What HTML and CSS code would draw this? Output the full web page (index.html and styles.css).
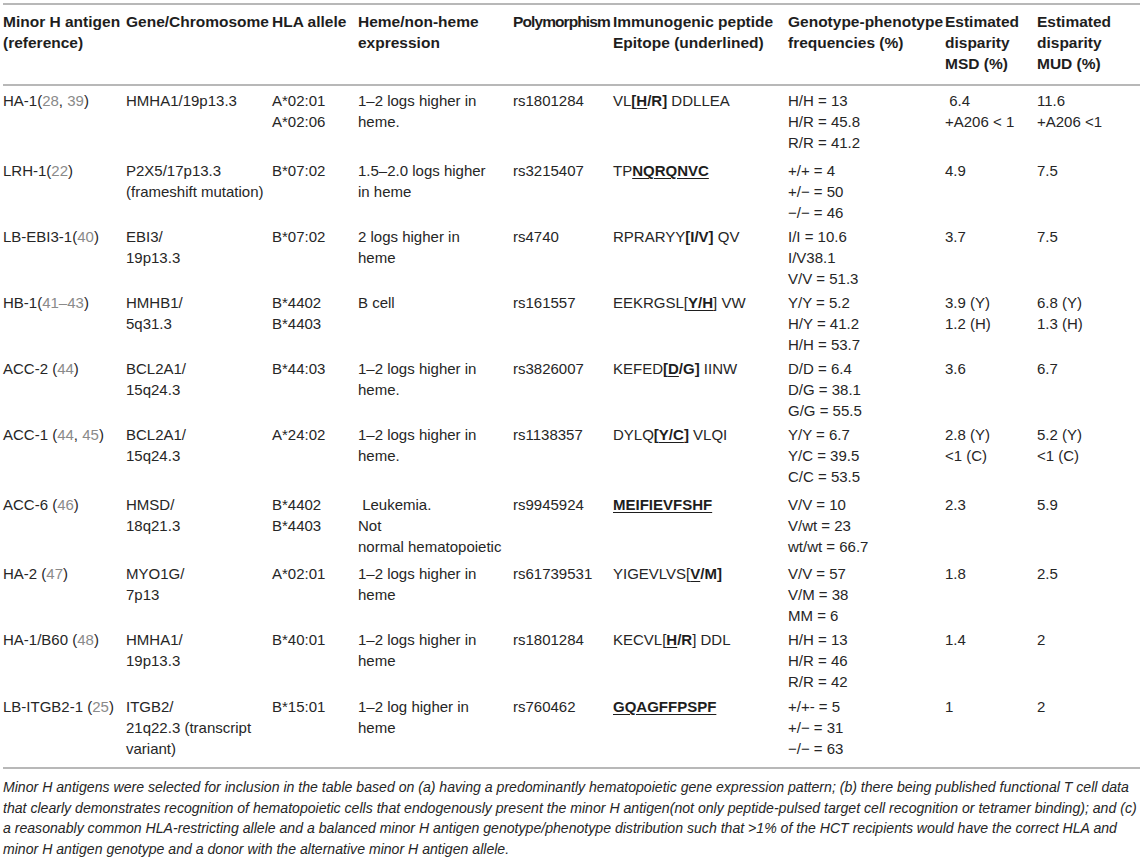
FILE: index.html
```html
<!DOCTYPE html>
<html lang="en">
<head>
<meta charset="utf-8">
<title>Minor H antigens</title>
<link rel="stylesheet" href="styles.css">
</head>
<body>
<div class="page">
<table class="mha">
<colgroup>
<col class="c1"><col class="c2"><col class="c3"><col class="c4"><col class="c5"><col class="c6"><col class="c7"><col class="c8"><col class="c9">
</colgroup>
<thead>
<tr>
<th>Minor H antigen<br>(reference)</th>
<th>Gene/Chromosome</th>
<th>HLA allele</th>
<th>Heme/non-heme<br>expression</th>
<th class="tight">Polymorphism</th>
<th>Immunogenic peptide<br>Epitope (underlined)</th>
<th>Genotype-phenotype<br>frequencies (%)</th>
<th>Estimated<br>disparity<br>MSD (%)</th>
<th>Estimated<br>disparity<br>MUD (%)</th>
</tr>
</thead>
<tbody>
<tr class="first gap4">
<td>HA-1(<span class="ref">28</span>, <span class="ref">39</span>)</td>
<td>HMHA1/19p13.3</td>
<td>A*02:01<br>A*02:06</td>
<td>1–2 logs higher in<br>heme.</td>
<td>rs1801284</td>
<td>VL<b>[<u>H</u>/R]</b> DDLLEA</td>
<td>H/H = 13<br>H/R = 45.8<br>R/R = 41.2</td>
<td>&nbsp;6.4<br>+A206 &lt; 1</td>
<td>11.6<br>+A206 &lt;1</td>
</tr>
<tr>
<td>LRH-1(<span class="ref">22</span>)</td>
<td>P2X5/17p13.3<br>(frameshift mutation)</td>
<td>B*07:02</td>
<td>1.5–2.0 logs higher<br>in heme</td>
<td>rs3215407</td>
<td>TP<b><u>NQRQNVC</u></b></td>
<td>+/+ = 4<br>+/− = 50<br>−/− = 46</td>
<td>4.9</td>
<td>7.5</td>
</tr>
<tr>
<td>LB-EBI3-1(<span class="ref">40</span>)</td>
<td>EBI3/<br>19p13.3</td>
<td>B*07:02</td>
<td>2 logs higher in<br>heme</td>
<td>rs4740</td>
<td>RPRARYY<b>[I/V]</b> QV</td>
<td>I/I = 10.6<br>I/V38.1<br>V/V = 51.3</td>
<td>3.7</td>
<td>7.5</td>
</tr>
<tr>
<td>HB-1(<span class="ref">41–43</span>)</td>
<td>HMHB1/<br>5q31.3</td>
<td>B*4402<br>B*4403</td>
<td>B cell</td>
<td>rs161557</td>
<td>EEKRGSL[<b><u>Y/H</u></b>] VW</td>
<td>Y/Y = 5.2<br>H/Y = 41.2<br>H/H = 53.7</td>
<td>3.9 (Y)<br>1.2 (H)</td>
<td>6.8 (Y)<br>1.3 (H)</td>
</tr>
<tr>
<td>ACC-2 (<span class="ref">44</span>)</td>
<td>BCL2A1/<br>15q24.3</td>
<td>B*44:03</td>
<td>1–2 logs higher in<br>heme.</td>
<td>rs3826007</td>
<td>KEFED<b>[<u>D</u>/G]</b> IINW</td>
<td>D/D = 6.4<br>D/G = 38.1<br>G/G = 55.5</td>
<td>3.6</td>
<td>6.7</td>
</tr>
<tr class="gap4">
<td>ACC-1 (<span class="ref">44</span>, <span class="ref">45</span>)</td>
<td>BCL2A1/<br>15q24.3</td>
<td>A*24:02</td>
<td>1–2 logs higher in<br>heme.</td>
<td>rs1138357</td>
<td>DYLQ<b>[<u>Y/C</u>]</b> VLQI</td>
<td>Y/Y = 6.7<br>Y/C = 39.5<br>C/C = 53.5</td>
<td>2.8 (Y)<br>&lt;1 (C)</td>
<td>5.2 (Y)<br>&lt;1 (C)</td>
</tr>
<tr class="gap3">
<td>ACC-6 (<span class="ref">46</span>)</td>
<td>HMSD/<br>18q21.3</td>
<td>B*4402<br>B*4403</td>
<td>&nbsp;Leukemia.<br>Not<br>normal hematopoietic</td>
<td>rs9945924</td>
<td><b><u>MEIFIEVFSHF</u></b></td>
<td>V/V = 10<br>V/wt = 23<br>wt/wt = 66.7</td>
<td>2.3</td>
<td>5.9</td>
</tr>
<tr>
<td>HA-2 (<span class="ref">47</span>)</td>
<td>MYO1G/<br>7p13</td>
<td>A*02:01</td>
<td>1–2 logs higher in<br>heme</td>
<td>rs61739531</td>
<td>YIGEVLVS[<b><u>V</u>/M]</b></td>
<td>V/V = 57<br>V/M = 38<br>MM = 6</td>
<td>1.8</td>
<td>2.5</td>
</tr>
<tr class="gap1">
<td>HA-1/B60 (<span class="ref">48</span>)</td>
<td>HMHA1/<br>19p13.3</td>
<td>B*40:01</td>
<td>1–2 logs higher in<br>heme</td>
<td>rs1801284</td>
<td>KECVL[<b><u>H</u>/R</b>] DDL</td>
<td>H/H = 13<br>H/R = 46<br>R/R = 42</td>
<td>1.4</td>
<td>2</td>
</tr>
<tr class="last">
<td>LB-ITGB2-1 (<span class="ref">25</span>)</td>
<td>ITGB2/<br>21q22.3 (transcript<br>variant)</td>
<td>B*15:01</td>
<td>1–2 log higher in<br>heme</td>
<td>rs760462</td>
<td><b><u>GQAGFFPSPF</u></b></td>
<td>+/+- = 5<br>+/− = 31<br>−/− = 63</td>
<td>1</td>
<td>2</td>
</tr>
</tbody>
</table>
<p class="note">Minor H antigens were selected for inclusion in the table based on (a) having a predominantly hematopoietic gene expression pattern; (b) there being published functional T cell data<br>that clearly demonstrates recognition of hematopoietic cells that endogenously present the minor H antigen(not only peptide-pulsed target cell recognition or tetramer binding); and (c)<br>a reasonably common HLA-restricting allele and a balanced minor H antigen genotype/phenotype distribution such that &gt;1% of the HCT recipients would have the correct HLA and<br>minor H antigen genotype and a donor with the alternative minor H antigen allele.</p>
</div>
</body>
</html>
```

FILE: styles.css
```css
html, body {
  margin: 0;
  padding: 0;
  background: #fff;
}

.page {
  padding: 3px 3px 0 3px;
  font-family: "Liberation Sans", Arial, sans-serif;
  color: #262626;
}

.mha {
  width: 1137px;
  border-collapse: collapse;
  table-layout: fixed;
  font-size: 15px;
  line-height: 21px;
}

.c1 { width: 123px; }
.c2 { width: 146px; }
.c3 { width: 86px; }
.c4 { width: 155px; }
.c5 { width: 100px; }
.c6 { width: 175px; }
.c7 { width: 157px; }
.c8 { width: 92px; }
.c9 { width: 103px; }

.mha thead tr {
  border-top: 2px solid #b8b8b8;
  border-bottom: 2px solid #b8b8b8;
}

.mha th {
  text-align: left;
  vertical-align: top;
  font-weight: bold;
  font-size: 15.5px;
  color: #1e1e1e;
  padding: 6px 0 10px 0;
  white-space: nowrap;
}

.mha th.tight {
  letter-spacing: -0.9px;
}

.mha td {
  vertical-align: top;
  padding: 3px 0 0 0;
  white-space: nowrap;
}

.mha tr.first td { padding-top: 4px; }
.mha tr.gap4 td { padding-bottom: 4px; }
.mha tr.gap3 td { padding-bottom: 3px; }
.mha tr.gap1 td { padding-bottom: 1px; }

.mha tr.last td {
  padding-bottom: 8px;
}

.mha tbody tr.last {
  border-bottom: 2px solid #b8b8b8;
}

.ref {
  color: #8a8a8a;
}

.mha b {
  color: #1e1e1e;
}

.mha u {
  text-decoration-thickness: 1px;
  text-underline-offset: 2px;
}

.note {
  margin: 0;
  padding-top: 8px;
  font-style: italic;
  font-size: 14.1px;
  line-height: 20.5px;
  white-space: nowrap;
}
```
